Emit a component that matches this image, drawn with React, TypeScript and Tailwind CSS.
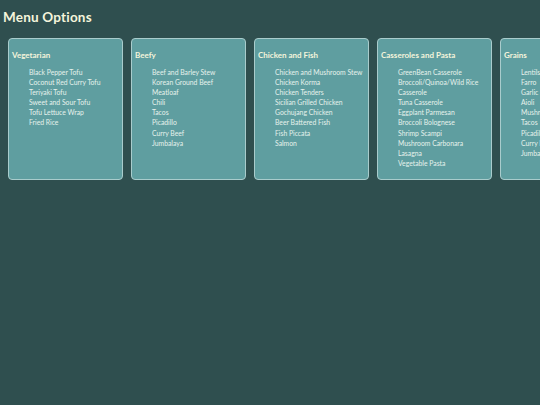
const MENU: { title: string; items: string[] }[] = [
  {
    title: 'Vegetarian',
    items: ['Black Pepper Tofu', 'Coconut Red Curry Tofu', 'Teriyaki Tofu', 'Sweet and Sour Tofu', 'Tofu Lettuce Wrap', 'Fried Rice'],
  },
  {
    title: 'Beefy',
    items: ['Beef and Barley Stew', 'Korean Ground Beef', 'Meatloaf', 'Chili', 'Tacos', 'Picadillo', 'Curry Beef', 'Jumbalaya'],
  },
  {
    title: 'Chicken and Fish',
    items: [
      'Chicken and Mushroom Stew',
      'Chicken Korma',
      'Chicken Tenders',
      'Sicilian Grilled Chicken',
      'Gochujang Chicken',
      'Beer Battered Fish',
      'Fish Piccata',
      'Salmon',
    ],
  },
  {
    title: 'Casseroles and Pasta',
    items: [
      'GreenBean Casserole',
      'Broccoli/Quinoa/Wild Rice',
      'Casserole',
      'Tuna Casserole',
      'Eggplant Parmesan',
      'Broccoli Bolognese',
      'Shrimp Scampi',
      'Mushroom Carbonara',
      'Lasagna',
      'Vegetable Pasta',
    ],
  },
  {
    title: 'Grains',
    items: ['Lentils', 'Farro', 'Garlic Rice', 'Aioli', 'Mushroom Risotto', 'Tacos', 'Picadillo', 'Curry Rice', 'Jumbalaya'],
  },
];

export default function App() {
  return (
    <div
      className="min-h-[405px] w-[540px] overflow-hidden bg-[#2f4f4f] text-[#f0f8e8]"
      style={{ fontFamily: 'Lato, "Open Sans", sans-serif' }}
    >
      {/* Heading */}
      <h1 className="pl-[3px] pt-[7px] text-[13.5px] font-bold leading-[20px] tracking-[0.2px] text-[#f5f5dc]">
        Menu Options
      </h1>

      {/* Category cards */}
      <div className="mt-[11px] flex gap-[8px] pl-[8px]">
        {MENU.map((group) => (
          <section
            key={group.title}
            className="h-[142px] w-[115px] shrink-0 rounded-[4px] border border-[#a9cccc] bg-[#5f9ea0] px-[3px] pt-[11px]"
          >
            <h2 className="text-[8px] font-bold leading-[10px] text-[#f5f5dc]">{group.title}</h2>
            <ul className="mt-[7px] pl-[17px] text-[6.8px] leading-[10.1px] text-[#e6f2ec]">
              {group.items.map((item) => (
                <li key={item} className="whitespace-nowrap">
                  {item}
                </li>
              ))}
            </ul>
          </section>
        ))}
      </div>
    </div>
  );
}
